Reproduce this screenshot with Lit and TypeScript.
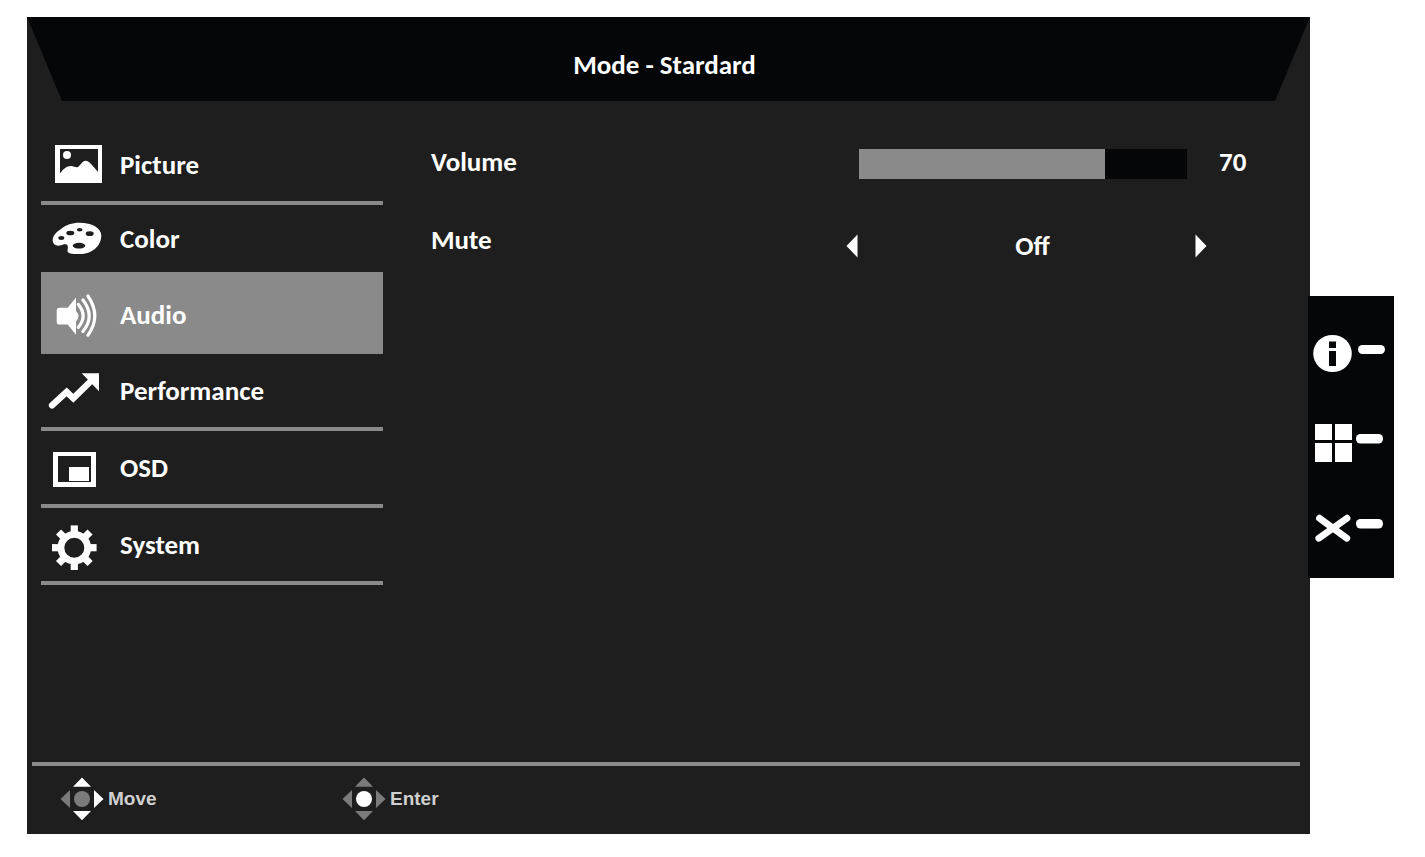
import { LitElement, html, css, svg, type TemplateResult } from "lit";
import { customElement, state } from "lit/decorators.js";
import { classMap } from "lit/directives/class-map.js";
import { styleMap } from "lit/directives/style-map.js";

interface MenuEntry {
  id: string;
  label: string;
  size: "regular" | "compact" | "tall";
  icon: TemplateResult;
}

const pictureIcon = svg`
  <path fill-rule="evenodd" d="M7 11H54V49H7Z M12 15V39.300C15 35.500 18.500 32 23 32C26 32 28 34 30 33C32.500 31 34.500 26.700 37.500 26.700C41.500 26.700 45.500 33 50 37.700V15Z"/>
  <circle cx="19" cy="21" r="4"/>`;

const colorIcon = svg`
  <path fill-rule="evenodd" d="M4.700 32C4.700 28 8 24 13 21C18 16.800 24 14.700 31.500 14.700C44 14.700 53.300 20 53.300 27.500C53.300 38.500 43.500 46 32 46C26.500 46 20.500 45.800 19.700 43.700C19 41.500 20.600 39.500 19.500 37.400C18.500 35.400 15.500 36.300 13 37.200C8.500 38.700 4.700 36.500 4.700 32Z
    M10.300 30a3 1.900 0 1 0 6 0a3 1.900 0 1 0 -6 0Z
    M18.300 25a4 2.300 0 1 0 8 0a4 2.300 0 1 0 -8 0Z
    M28.900 21.700a2.800 1.700 0 1 0 5.600 0a2.800 1.700 0 1 0 -5.600 0Z
    M37.700 25.700a4 2.400 0 1 0 8 0a4 2.400 0 1 0 -8 0Z
    M24.700 37.700a6.300 2.900 0 1 0 12.600 0a6.300 2.900 0 1 0 -12.600 0Z"/>`;

const audioIcon = svg`
  <g transform="translate(0 -2)">
    <path d="M11 24.800H19.700L28 14.500V51.800L19.700 41.500H11Q8.700 41.500 8.700 39V27.300Q8.700 24.800 11 24.800Z"/>
    <path d="M28 28Q33 33 28 38.500Z"/>
    <path class="line" stroke-width="3.200" d="M30.300 21.400Q40 33 30.300 44.400M34.900 17Q47.500 33 34.900 48.600M39.900 13Q53.700 33 39.900 52.300"/>
  </g>`;

const performanceIcon = svg`
  <path class="line" stroke-width="6.400" d="M4 45.400L18.700 31.900L25.300 38.200L44.500 19.500"/>
  <path d="M33.700 13.300H51V31.300Z"/>`;

const osdIcon = svg`
  <path fill-rule="evenodd" d="M5 15H48V50H5Z M10 19V45H43V19Z"/>
  <rect x="21" y="30" width="20" height="14"/>`;

const systemIcon = svg`
  <circle cx="26.300" cy="33.700" r="13.400" fill="none" stroke="#fff" stroke-width="6.800"/>
  ${[0, 45, 90, 135, 180, 225, 270, 315].map(
    (turn) => svg`<path transform="rotate(${turn} 26.300 33.700)" d="M22.700 11.400H29.900V20H22.700Z"/>`
  )}`;

const infoIcon = svg`
  <ellipse cx="24.500" cy="43.500" rx="19.300" ry="18.600"/>
  <path fill="#040608" d="M21 31.500H28V38H21Z M21 41H28V56H21Z"/>
  <rect x="50" y="35" width="27" height="9" rx="4.500"/>`;

const inputIcon = svg`
  <path d="M7 26H24V42H7Z M27 26H44V42H27Z M7 45H24V64H7Z M27 45H44V64H27Z"/>
  <rect x="48" y="36" width="27" height="9.500" rx="4.500"/>`;

const closeIcon = svg`
  <path class="line" stroke-width="6.800" d="M11.500 32.200L38.800 52.200M39 32.200L10.800 52.200"/>
  <rect x="48" y="33" width="27" height="9.500" rx="4.500"/>`;

const menu: MenuEntry[] = [
  { id: "picture", label: "Picture", size: "regular", icon: pictureIcon },
  { id: "color", label: "Color", size: "compact", icon: colorIcon },
  { id: "audio", label: "Audio", size: "tall", icon: audioIcon },
  { id: "performance", label: "Performance", size: "regular", icon: performanceIcon },
  { id: "osd", label: "OSD", size: "regular", icon: osdIcon },
  { id: "system", label: "System", size: "regular", icon: systemIcon },
];

const railKeys = [
  { label: "Information", icon: infoIcon },
  { label: "Input", icon: inputIcon },
  { label: "Close", icon: closeIcon },
];

@customElement("app-root")
export class AppRoot extends LitElement {
  @state() private selected = "audio";
  @state() private volume = 70;
  @state() private volumeFill = 75;
  @state() private muted = false;

  static styles = css`
    :host {
      display: block;
      background: #fff;
      color: #fff;
      font: 700 27px/26px Carlito, Lato, "Open Sans", sans-serif;
    }
    * {
      box-sizing: border-box;
    }
    svg {
      display: block;
      flex: none;
      fill: #fff;
    }
    .line {
      fill: none;
      stroke: #fff;
      stroke-linecap: round;
    }
    button {
      margin: 0;
      padding: 0;
      border: 0;
      background: none;
      color: inherit;
      font: inherit;
      text-align: left;
      cursor: pointer;
    }
    .page {
      display: flex;
      align-items: flex-start;
      min-height: 100vh;
      padding: 17px 31px 23px 27px;
    }
    .panel {
      flex: 1;
      display: flex;
      flex-direction: column;
      min-height: calc(100vh - 40px);
      background: #1e1e1e;
    }
    .header {
      padding: 35px 8px 23px 0;
      background: #040608;
      clip-path: polygon(0 0, 100% 0, calc(100% - 35px) 100%, 35px 100%);
      text-align: center;
    }
    h1 {
      margin: 0;
      font: inherit;
    }
    .body {
      flex: 1;
      display: flex;
      gap: 48px;
      padding: 27px 63px 0 14px;
    }
    .nav {
      flex: none;
      width: 342px;
    }
    .entry {
      display: flex;
      align-items: center;
      gap: 16px;
      width: 100%;
      padding-left: 7px;
    }
    .regular {
      height: 77px;
      border-bottom: 4px solid #8a8a8a;
    }
    .compact {
      height: 67px;
    }
    .tall {
      height: 82px;
      padding-top: 4px;
    }
    .selected {
      background: #8a8a8a;
    }
    .settings {
      flex: 1;
      padding-top: 21px;
    }
    .setting {
      display: flex;
      align-items: flex-start;
      min-height: 30px;
      margin-bottom: 48px;
    }
    .name {
      flex: 1;
    }
    .slider {
      appearance: none;
      width: 328px;
      height: 30px;
      margin: 0;
      background: #040608;
      cursor: pointer;
    }
    .slider::-webkit-slider-thumb {
      appearance: none;
      width: 1px;
      height: 30px;
      opacity: 0;
    }
    .amount {
      width: 28px;
      margin-left: 32px;
    }
    .stepper {
      display: flex;
      align-items: center;
      justify-content: space-between;
      width: 361px;
      height: 38px;
      margin-right: 40px;
    }
    .choice {
      padding-left: 12px;
    }
    .footer {
      display: flex;
      align-items: center;
      height: 72px;
      margin: 0 10px 0 5px;
      padding: 0 0 2px 28px;
      border-top: 4px solid #8a8a8a;
      color: #d0d0d0;
      font: 700 19px/22px "Liberation Sans", Arial, sans-serif;
    }
    .hint {
      display: flex;
      align-items: center;
      gap: 4px;
      width: 282px;
    }
    .dim {
      fill: #7b7b7b;
    }
    .rail {
      flex: none;
      display: flex;
      flex-direction: column;
      gap: 2px;
      margin: 279px 0 0 -2px;
      padding: 14px 0 6px;
      background: #040608;
    }
  `;

  private setVolume(event: Event) {
    this.volume = Number((event.target as HTMLInputElement).value);
    this.volumeFill = this.volume;
  }

  private toggleMute() {
    this.muted = !this.muted;
  }

  private renderEntry(entry: MenuEntry) {
    const classes = { entry: true, [entry.size]: true, selected: entry.id === this.selected };
    return html`
      <button class=${classMap(classes)} @click=${() => (this.selected = entry.id)}>
        <svg width="56" height="61" viewBox="0 0 56 61" aria-hidden="true">${entry.icon}</svg>
        <span>${entry.label}</span>
      </button>
    `;
  }

  private renderPad(mode: "move" | "enter") {
    const arrow = mode === "move" ? "" : "dim";
    return html`
      <svg width="44" height="44" viewBox="0 0 44 44" aria-hidden="true">
        <path class=${arrow} d="M22 0.500L31 9.800H13Z M22 43.300L31 34H13Z M43.500 22L34 13V31Z" />
        <path class="dim" d="M0.500 22L10 13V31Z" />
        <circle class=${mode === "move" ? "dim" : ""} cx="22" cy="22" r="8" />
      </svg>
    `;
  }

  render() {
    return html`
      <div class="page">
        <main class="panel">
          <header class="header"><h1>Mode - Stardard</h1></header>
          <div class="body">
            <nav class="nav">${menu.map((entry) => this.renderEntry(entry))}</nav>
            <section class="settings">
              <div class="setting">
                <label class="name" for="volume">Volume</label>
                <input
                  id="volume"
                  class="slider"
                  type="range"
                  min="0"
                  max="100"
                  .value=${String(this.volume)}
                  style=${styleMap({
                    backgroundImage: `linear-gradient(to right, #8a8a8a ${this.volumeFill}%, #040608 ${this.volumeFill}%)`,
                  })}
                  @input=${this.setVolume}
                />
                <output class="amount" for="volume">${this.volume}</output>
              </div>
              <div class="setting">
                <span class="name" id="mute">Mute</span>
                <div class="stepper" role="group" aria-labelledby="mute">
                  <button aria-label="Previous" @click=${this.toggleMute}>
                    <svg width="12" height="24" viewBox="0 0 12 24"><path d="M0.500 12L11.500 0.500V23.500Z" /></svg>
                  </button>
                  <output class="choice">${this.muted ? "On" : "Off"}</output>
                  <button aria-label="Next" @click=${this.toggleMute}>
                    <svg width="12" height="24" viewBox="0 0 12 24"><path d="M11.500 12L0.500 0.500V23.500Z" /></svg>
                  </button>
                </div>
              </div>
            </section>
          </div>
          <footer class="footer">
            <div class="hint">${this.renderPad("move")}<span>Move</span></div>
            <div class="hint">${this.renderPad("enter")}<span>Enter</span></div>
          </footer>
        </main>
        <aside class="rail">
          ${railKeys.map(
            (key) => html`
              <button aria-label=${key.label}>
                <svg width="86" height="86" viewBox="0 0 86 86" aria-hidden="true">${key.icon}</svg>
              </button>
            `
          )}
        </aside>
      </div>
    `;
  }
}
